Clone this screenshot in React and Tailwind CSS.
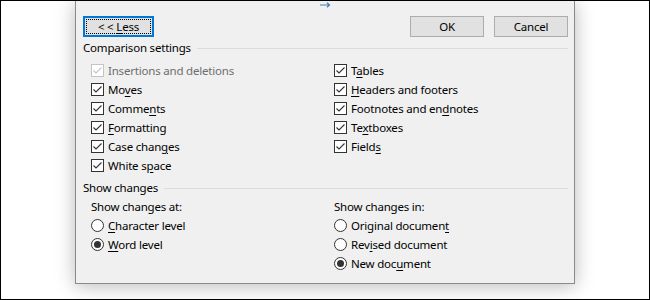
import React from "react";

const FONT = { fontFamily: '"Segoe UI", "Noto Sans", "Open Sans", sans-serif' };

// "Mo&ves" -> Mo<u>v</u>es
function Label({ text }) {
  const i = text.indexOf("&");
  if (i < 0) return <span>{text}</span>;
  return (
    <span>
      {text.slice(0, i)}
      <u className="underline-offset-2">{text[i + 1]}</u>
      {text.slice(i + 2)}
    </span>
  );
}

function CheckRow({ label, disabled }) {
  return (
    <div className="h-[19px] flex items-center gap-[4px]">
      <span
        className={`w-[13px] h-[13px] border bg-white flex items-center justify-center shrink-0 ${
          disabled ? "border-[#c4c4c4]" : "border-[#333333]"
        }`}
      >
        <svg width="11" height="11" viewBox="0 0 11 11">
          <path
            d="M1.5 5.5 L4 8 L9.5 2.5"
            fill="none"
            stroke={disabled ? "#c4c4c4" : "#333333"}
            strokeWidth="1.1"
          />
        </svg>
      </span>
      <span className={disabled ? "text-[#6d6d6d]" : "text-black"}>
        <Label text={label} />
      </span>
    </div>
  );
}

function RadioRow({ label, on }) {
  return (
    <div className="h-[19px] flex items-center gap-[4px]">
      <span className="w-[13px] h-[13px] rounded-full border border-[#333333] bg-white flex items-center justify-center shrink-0">
        {on && <span className="w-[7px] h-[7px] rounded-full bg-[#333333]" />}
      </span>
      <Label text={label} />
    </div>
  );
}

function SectionTitle({ children }) {
  return (
    <div className="h-[16px] flex items-center pl-[7px] pr-[6px]">
      <span>{children}</span>
      <span className="flex-1 h-px bg-[#dcdcdc] ml-[6px]" />
    </div>
  );
}

export default function App() {
  return (
    <div
      className="w-[650px] h-[300px] bg-white border border-black overflow-hidden pl-[74px]"
      style={FONT}
    >
      <div className="w-[500px] h-[283px] bg-[#f0f0f0] border-x border-b border-[#8a8a8a] shadow-[0_2px_18px_rgba(0,0,0,0.28)] flex flex-col text-[11.5px] tracking-[-0.2px] text-black leading-none">
        <div className="h-[8px] flex items-center justify-center">
          <svg width="11" height="6" viewBox="0 0 11 6">
            <path d="M0 3 H9.5 M7 0.8 L9.5 3 L7 5.2" fill="none" stroke="#4a7ab8" strokeWidth="1.2" />
          </svg>
        </div>

        <div className="mt-[7px] h-[21px] flex justify-between pl-[7px] pr-[6px]">
          <button className="w-[71px] h-[21px] border-2 border-[#0078d7] bg-[#e1e1e1] p-px">
            <span className="h-full flex items-center justify-center border border-dotted border-black">
              <span>
                &lt; &lt; <u className="underline-offset-2">L</u>ess
              </span>
            </span>
          </button>
          <div className="flex gap-[10px]">
            <button className="w-[74px] h-[21px] border border-[#adadad] bg-[#e1e1e1]">OK</button>
            <button className="w-[74px] h-[21px] border border-[#adadad] bg-[#e1e1e1]">Cancel</button>
          </div>
        </div>

        <div className="mt-[3px]">
          <SectionTitle>Comparison settings</SectionTitle>
        </div>

        <div className="mt-[5px] flex">
          <div className="w-[258px] pl-[15px]">
            <CheckRow label="Insertions and deletions" disabled />
            <CheckRow label="Mo&ves" />
            <CheckRow label="Comme&nts" />
            <CheckRow label="&Formatting" />
            <CheckRow label="Case chan&ges" />
            <CheckRow label="White s&pace" />
          </div>
          <div>
            <CheckRow label="T&ables" />
            <CheckRow label="&Headers and footers" />
            <CheckRow label="Footnotes and en&dnotes" />
            <CheckRow label="Te&xtboxes" />
            <CheckRow label="Field&s" />
          </div>
        </div>

        <div className="mt-[5px]">
          <SectionTitle>Show changes</SectionTitle>
        </div>

        <div className="mt-[2px] flex">
          <div className="w-[258px] pl-[15px]">
            <div className="h-[18px] flex items-center">Show changes at:</div>
            <RadioRow label="&Character level" />
            <RadioRow label="&Word level" on />
          </div>
          <div>
            <div className="h-[18px] flex items-center">Show changes in:</div>
            <RadioRow label="Original documen&t" />
            <RadioRow label="Rev&ised document" />
            <RadioRow label="New doc&ument" on />
          </div>
        </div>
      </div>
    </div>
  );
}
